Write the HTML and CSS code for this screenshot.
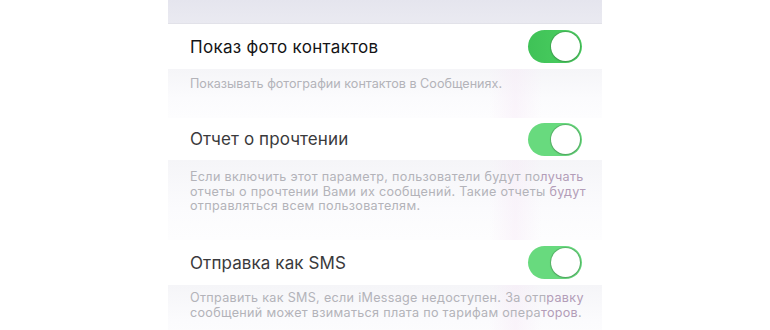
FILE: index.html
```html
<!DOCTYPE html>
<html>
<head>
  <meta charset="UTF-8">
  <title>Сообщения</title>
  <link rel="stylesheet" href="styles.css">
</head>
<body>
  <div class="screen">
    <div class="top-band"></div>

    <div class="row row-first">
      <span class="row-title strong">Показ фото контактов</span>
      <span class="switch switch-bright"><span class="knob"></span></span>
    </div>
    <div class="footer footer-first">
      Показывать фотографии контактов в Сообщениях.
    </div>

    <div class="row row-second">
      <span class="row-title">Отчет о прочтении</span>
      <span class="switch"><span class="knob"></span></span>
    </div>
    <div class="footer footer-second">
      Если включить этот параметр, пользователи будут по<span class="tint">лучать</span><br>
      отчеты о прочтении Вами их сообщений. Такие отчеты <span class="tint">будут</span><br>
      отправляться всем пользователям.
    </div>

    <div class="row row-third">
      <span class="row-title">Отправка как SMS</span>
      <span class="switch"><span class="knob"></span></span>
    </div>
    <div class="footer footer-third">
      Отправить как SMS, если iMessage недоступен. За отп<span class="tint">равку</span><br>
      сообщений может взиматься плата по тарифам опера<span class="tint">торов</span>.
    </div>
  </div>
</body>
</html>
```

FILE: styles.css
```css
body {
  margin: 0;
  background: #fff;
  font-family: Inter, "Open Sans", sans-serif;
}

.screen {
  width: 434px;
  height: 330px;
  margin: 0 auto;
  overflow: hidden;
  background: #fff;
}

.top-band {
  height: 24px;
  background: linear-gradient(to bottom, #e5e5ee, #eaeaf1);
  border-bottom: 1px solid #e2e2e9;
  box-sizing: border-box;
}

.row {
  display: flex;
  align-items: center;
  justify-content: space-between;
  padding: 0 20px 0 22px;
  background: #fff;
}

.row-first {
  height: 45px;
}

.row-second {
  height: 42px;
}

.row-third {
  height: 45px;
}

.row-title {
  font-size: 17px;
  color: #3a3a3c;
  letter-spacing: 0.1px;
}

.row-title.strong {
  color: #141416;
  letter-spacing: 0.3px;
}

.switch {
  display: flex;
  justify-content: flex-end;
  align-items: center;
  width: 54px;
  height: 33px;
  padding: 2px;
  box-sizing: border-box;
  border-radius: 17px;
  background: #68da7e;
}

.switch-bright {
  background: linear-gradient(to right, #3fc257, #4cd062);
}

.knob {
  width: 29px;
  height: 29px;
  border-radius: 50%;
  background: #fff;
  box-shadow: 0 0 0 1px rgba(60, 120, 70, 0.35), 0 1px 2px rgba(0, 0, 0, 0.15);
}

.footer {
  padding: 0 22px;
  font-size: 12.6px;
  line-height: 14.5px;
  color: #b3b3b9;
  letter-spacing: 0.3px;
  white-space: nowrap;
  background:
    linear-gradient(to right, rgba(255, 255, 255, 0) 74%, rgba(247, 234, 247, 0.45) 80%, rgba(255, 255, 255, 0) 86%),
    linear-gradient(to bottom, #f5f5f8, #fbfbfd 60%, #fdfdfe);
  box-sizing: border-box;
}

.footer-first {
  height: 49px;
  padding-top: 8px;
  letter-spacing: 0;
}

.footer-second {
  height: 80px;
  padding-top: 10px;
}

.footer-third {
  height: 60px;
  padding-top: 6px;
}

.tint {
  color: #b39db8;
}
```
